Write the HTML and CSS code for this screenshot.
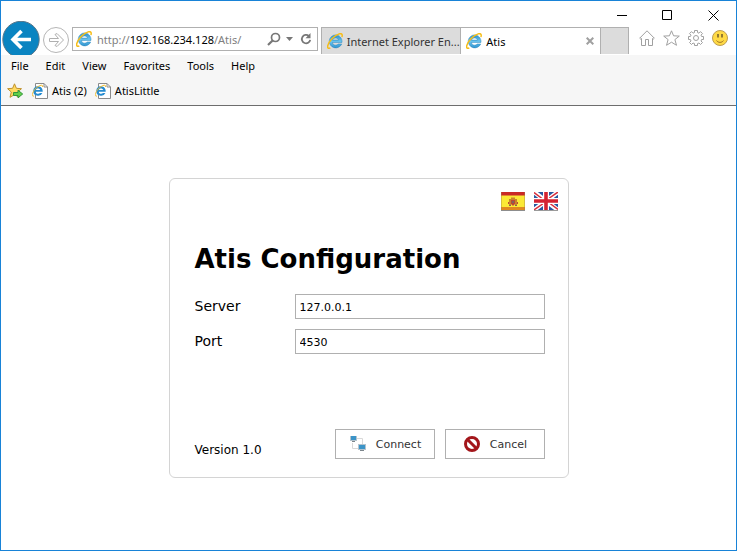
FILE: index.html
```html
<!DOCTYPE html>
<html lang="en">
<head>
    <meta charset="UTF-8">
    <meta name="viewport" content="width=device-width, initial-scale=1.0">
    <title>Atis</title>
    <link rel="stylesheet" href="styles.css">
</head>
<body>

    <!-- Shared icons -->
    <svg class="sprite" aria-hidden="true">
        <defs>
            <linearGradient id="ie-blue" x1="0" y1="0" x2="0" y2="1">
                <stop offset="0" stop-color="#2b8fc8"/>
                <stop offset="0.5" stop-color="#6cc4ee"/>
                <stop offset="1" stop-color="#2f94d0"/>
            </linearGradient>
        </defs>
        <symbol id="ie" viewBox="0 0 16 16">
            <path fill-rule="evenodd" d="M8.500 1.900A6.500 6.500 0 1 0 14.700 11H11.100C9.700 12.900 5.700 12.500 5.500 9.400H15C15.300 5.200 12.500 1.900 8.500 1.900ZM5.600 7.100C6.100 4.200 11.100 4.200 11.400 7.100Z" fill="url(#ie-blue)" stroke="#2585bd" stroke-width="0.500"/>
            <path d="M3.300 14.800C1.500 16 .3 15.100.7 12.900C1.600 8.500 7.300 2.400 12.200.9C14.900.1 15.700 1.600 14.900 4" fill="none" stroke="#f6bd18" stroke-width="1.500"/>
        </symbol>
        <symbol id="ie-page" viewBox="0 0 16 16">
            <path d="M3.500.5H12L15.500 4V15.500H3.500Z" fill="#fff" stroke="#8b8b8b"/>
            <path d="M12 .5V4H15.500" fill="none" stroke="#8b8b8b"/>
            <path fill-rule="evenodd" d="M5.800 3.200A4.800 4.800 0 1 0 10.400 10H8C6.900 11.400 3.700 11 3.600 8.700H10.700C10.900 5.400 8.700 3.200 5.800 3.200ZM3.700 7C4.200 4.900 7.900 4.900 8.300 7Z" fill="#278cd0"/>
            <path d="M2 13C-1.200 14 .4 8.600 4.200 5C7.200 2.200 11.400.9 10.400 4" fill="none" stroke="#f3bd2b"/>
        </symbol>
    </svg>

    <header class="chrome">
        <div class="titlebar">
            <button class="window-btn" aria-label="Minimize"><svg width="11" height="11" viewBox="0 0 11 11"><path d="M1 5.500H11"/></svg></button>
            <button class="window-btn" aria-label="Maximize"><svg width="11" height="11" viewBox="0 0 11 11"><path d="M.5.500H9.500V9.500H.5Z"/></svg></button>
            <button class="window-btn" aria-label="Close"><svg width="11" height="11" viewBox="0 0 11 11"><path d="M.5.500L10.500 10.500M10.500.500L.5 10.500"/></svg></button>
        </div>

        <div class="navbar">
            <button class="nav-btn back-btn" aria-label="Back">
                <svg width="38" height="34" viewBox="0 0 38 34">
                    <circle cx="19" cy="18.500" r="18.200" fill="#0a84c1" stroke="#58768a"/>
                    <path d="M29 18.500H11M19.500 10L11 18.500L19.500 27" fill="none" stroke="#fff" stroke-width="3.600"/>
                </svg>
            </button>
            <button class="nav-btn forward-btn" aria-label="Forward">
                <svg width="26" height="26" viewBox="0 0 26 26">
                    <circle cx="13" cy="13" r="12.500" fill="#fff" stroke="#b5b5b5"/>
                    <path d="M6.500 11.500H15.500L12 7.500L14 6.500L20.500 13L14 19.500L12 18.500L15.500 14.500H6.500Z" fill="#fff" stroke="#b0b0b0"/>
                </svg>
            </button>

            <div class="address">
                <svg class="site-icon" width="16" height="16"><use href="#ie"/></svg>
                <span class="url">http://<span class="host">192.168.234.128</span>/Atis/</span>
                <button class="nav-btn" aria-label="Search">
                    <svg width="14" height="14" viewBox="0 0 14 14"><circle cx="8.500" cy="5.500" r="4" fill="none" stroke="#777" stroke-width="1.700"/><path d="M5.600 8.500L1 13" stroke="#777" stroke-width="2.200"/></svg>
                </button>
                <button class="nav-btn" aria-label="Show address list">
                    <svg width="7" height="4" viewBox="0 0 7 4"><path d="M0 0H7L3.500 4Z" fill="#777"/></svg>
                </button>
                <button class="nav-btn refresh-btn" aria-label="Refresh">
                    <svg width="12" height="12" viewBox="0 0 12 12"><path d="M8.800 2.900A4.200 4.200 0 1 0 10.200 6.800" fill="none" stroke="#777" stroke-width="1.800"/><path d="M10.500 0V5.200H5.500Z" fill="#777"/></svg>
                </button>
            </div>

            <div class="tabs">
                <div class="tab">
                    <svg class="site-icon" width="16" height="16"><use href="#ie"/></svg>
                    <span class="tab-title">Internet Explorer En...</span>
                </div>
                <div class="tab active">
                    <svg class="site-icon" width="16" height="16"><use href="#ie"/></svg>
                    <span class="tab-title">Atis</span>
                    <button class="nav-btn" aria-label="Close tab">
                        <svg width="8" height="8" viewBox="0 0 8 8"><path d="M.7.700L7.300 7.300M7.300.700L.7 7.300" stroke="#a0a0a0" stroke-width="2"/></svg>
                    </button>
                </div>
                <button class="new-tab" aria-label="New tab"></button>
            </div>

            <div class="tools">
                <button class="nav-btn" aria-label="Home">
                    <svg width="16" height="16" viewBox="0 0 16 16"><path d="M.7 8.200L8 .8L15.300 8.200L14.300 9.100L13.500 8.500V15.500H9.500V9.500H6.500V15.500H2.500V8.500L1.700 9.100Z" fill="none" stroke="#a0a0a0"/></svg>
                </button>
                <button class="nav-btn" aria-label="Favorites">
                    <svg width="17" height="16" viewBox="0 0 17 16"><path d="M8.500.800L10.600 5.800L16.300 6.100L11.900 9.600L13.500 15.300L8.500 12.200L3.500 15.300L5.100 9.600L.7 6.100L6.400 5.800Z" fill="none" stroke="#a0a0a0"/></svg>
                </button>
                <button class="nav-btn" aria-label="Tools">
                    <svg width="16" height="16" viewBox="0 0 16 16" fill="none" stroke="#a0a0a0"><path d="M6.500.500H9.500V2.500L11 3.200L12.500 1.600L14.500 3.600L13 5.100L13.600 6.500H15.500V9.500H13.600L13 11L14.500 12.500L12.500 14.500L11 13L9.500 13.600V15.500H6.500V13.600L5 13L3.500 14.500L1.500 12.500L3 11L2.400 9.500H.5V6.500H2.400L3 5.100L1.500 3.600L3.500 1.600L5 3.200L6.500 2.500Z"/><circle cx="8" cy="8" r="2.500"/></svg>
                </button>
                <button class="nav-btn" aria-label="Send a smile">
                    <svg width="16" height="16" viewBox="0 0 16 16"><circle cx="8" cy="8" r="7.500" fill="#ffda45" stroke="#bd9d52"/><path d="M6 4V7.500M10 4V7.500" stroke="#705b2a" stroke-width="1.500"/><path d="M4.500 10.500C6 13 10 13 11.500 10.500" fill="none" stroke="#a37728"/></svg>
                </button>
            </div>
        </div>

        <nav class="menubar">
            <a href="#">File</a>
            <a href="#">Edit</a>
            <a href="#">View</a>
            <a href="#">Favorites</a>
            <a href="#">Tools</a>
            <a href="#">Help</a>
        </nav>

        <nav class="favorites">
            <button class="nav-btn" aria-label="Add to favorites bar">
                <svg width="17" height="16" viewBox="0 0 17 16"><path d="M7.500.800L9.400 5.300L14.500 5.700L10.700 9L12 14.300L7.500 11.600L3 14.300L4.300 9L.6 5.700L5.600 5.300Z" fill="#ffda62" stroke="#bf912c"/><path d="M6.500 9.500H11V7.200L15.700 11L11 14.800V12.500H6.500Z" fill="#62cf4a" stroke="#32963a"/></svg>
            </button>
            <a href="#"><svg width="16" height="16"><use href="#ie-page"/></svg>Atis (2)</a>
            <a href="#"><svg width="16" height="16"><use href="#ie-page"/></svg>AtisLittle</a>
        </nav>
    </header>

    <main class="content">
        <form class="login-box">
            <div class="languages">
                <button type="button" class="flag" aria-label="Español">
                    <svg width="24" height="19" viewBox="0 0 24 19">
                        <path fill="#c92a26" d="M0 0H24V4H0Z"/>
                        <path fill="#fbe935" d="M0 3.500H24V15H0Z"/>
                        <path fill="#e08a20" d="M0 15H24V18H0Z"/>
                        <path fill="#c9852b" d="M8 7H10V14H8ZM14 7H16V14H14ZM10 5.500H14V8H10Z"/>
                        <path fill="#bb4934" d="M10 8H14V12L12 14L10 12ZM7 10H8V12H7ZM16 10H17V12H16Z"/>
                        <path fill="#7e665d" d="M11 9H13V11H11ZM8 13H10V14H8ZM14 13H16V14H14Z"/>
                        <path d="M0 18.500H24" stroke="#8d8d8d"/>
                        <path d="M.5 0V18M23.500 0V18" stroke="#a08050" stroke-opacity=".4"/>
                    </svg>
                </button>
                <button type="button" class="flag" aria-label="English">
                    <svg width="24" height="19" viewBox="0 0 24 19">
                        <path fill="#28589f" d="M0 0H24V18H0Z"/>
                        <path d="M0 0L24 18M24 0L0 18" stroke="#fff" stroke-width="4.500"/>
                        <path d="M0 .5L10 8M24 0L14 7M0 18L10 11M24 17.500L14 10" stroke="#d92e3b" stroke-width="1.500"/>
                        <path d="M12 0V18M0 9H24" stroke="#fff" stroke-width="6"/>
                        <path d="M12 0V18M0 9H24" stroke="#d52331" stroke-width="3.600"/>
                        <path d="M0 18.500H24" stroke="#9a9a9a"/>
                    </svg>
                </button>
            </div>

            <h1>Atis Configuration</h1>

            <div class="field">
                <label for="server">Server</label>
                <input type="text" id="server" value="127.0.0.1">
            </div>
            <div class="field">
                <label for="port">Port</label>
                <input type="text" id="port" value="4530">
            </div>

            <div class="actions">
                <span class="version">Version 1.0</span>
                <button type="submit" class="action-btn">
                    <svg width="16" height="16" viewBox="0 0 16 16"><path d="M7 2.500H12.500V8M2.500 7V12.500H8" fill="none" stroke="#d8d8d8"/><path fill="#b4c4ce" d="M0 0H7V5H0ZM8 8H16V14H8Z"/><path fill="#3c94c8" d="M1 0H6V4H1ZM9 9H15V13H9Z"/><path fill="#7d868c" d="M2 5H5V6H2ZM10 14H14V15H10Z"/></svg>
                    Connect
                </button>
                <button type="button" class="action-btn">
                    <svg width="16" height="16" viewBox="0 0 16 16"><circle cx="8" cy="8" r="6.500" fill="#fff" stroke="#a3161b" stroke-width="3"/><path d="M3.500 3.500L12.500 12.500" stroke="#a3161b" stroke-width="3"/></svg>
                    Cancel
                </button>
            </div>
        </form>
    </main>

</body>
</html>
```
FILE: styles.css
```css
* {
    box-sizing: border-box;
}
body {
    margin: 0;
    min-height: 100vh;
    display: flex;
    flex-direction: column;
    border: 1px solid #1883d7;
    background: #fff;
    color: #000;
    font-family: "DejaVu Sans", Verdana, sans-serif;
}
svg {
    display: block;
    flex-shrink: 0;
}
.sprite {
    position: absolute;
    width: 0;
    height: 0;
}
button {
    font-family: inherit;
    cursor: pointer;
}

/* Browser chrome */
.chrome {
    font-family: "Noto Sans", "Open Sans", sans-serif;
    font-size: 11px;
    border-bottom: 1px solid #6d6d6d;
    background: #f6f6f6;
}
.titlebar {
    display: flex;
    justify-content: flex-end;
    height: 26px;
    background: #fff;
}
.window-btn {
    width: 46px;
    padding: 3px 0 0 1px;
    border: 0;
    background: none;
    display: flex;
    align-items: center;
    justify-content: center;
}
.window-btn svg {
    fill: none;
    stroke: #000;
}
.navbar {
    display: flex;
    align-items: flex-start;
    height: 28px;
    padding-left: 1px;
    background: #fff;
}
.nav-btn {
    padding: 0;
    border: 0;
    background: none;
}
.back-btn {
    align-self: flex-end;
}
.forward-btn {
    margin: 0 3px;
}
.address {
    display: flex;
    align-items: center;
    flex: 10 1 0;
    height: 24px;
    padding: 0 5px 0 3px;
    gap: 5px;
    border: 1px solid #b0b0b0;
    white-space: nowrap;
}
.url {
    flex: 1;
    color: #808080;
}
.host {
    color: #000;
}
.refresh-btn {
    margin-left: 2px;
}
.tabs {
    display: flex;
    flex: 13 1 0;
    height: 27px;
    margin-left: 3px;
    border: 1px solid #b0b0b0;
    border-bottom: 0;
}
.tab {
    display: flex;
    align-items: center;
    flex: 1;
    min-width: 0;
    padding: 0 6px 0 5px;
    gap: 4px;
    border-right: 1px solid #b0b0b0;
    background: #dcdcdc;
    color: #333;
}
.tab.active {
    background: #fff;
    color: #000;
}
.tab-title {
    flex: 1;
    white-space: nowrap;
}
.new-tab {
    width: 27px;
    padding: 0;
    border: 0;
    background: #dcdcdc;
}
.tools {
    display: flex;
    align-items: center;
    gap: 8px;
    padding: 3px 8px 0 10px;
}
.menubar {
    display: flex;
    align-items: center;
    height: 21px;
    padding: 0 10px;
    gap: 17px;
}
.menubar a,
.favorites a {
    color: #000;
    text-decoration: none;
}
.favorites {
    display: flex;
    align-items: center;
    height: 29px;
    padding: 0 6px;
    gap: 8px;
}
.favorites a {
    display: flex;
    align-items: center;
    gap: 4px;
}

/* Page */
.content {
    flex: 1;
    display: flex;
    align-items: center;
    justify-content: center;
}
.login-box {
    width: 400px;
    min-height: 300px;
    padding: 13px 23px 18px 25px;
    display: flex;
    flex-direction: column;
    border: 1px solid #d4d4d4;
    border-radius: 6px;
}
.languages {
    display: flex;
    justify-content: flex-end;
    gap: 9px;
    margin-right: -13px;
}
.flag {
    padding: 0;
    border: 0;
    background: none;
}
h1 {
    margin: 32px 0 19px;
    font-size: 26px;
    line-height: 32px;
    white-space: nowrap;
}
.field {
    display: flex;
    align-items: center;
    margin-bottom: 10px;
}
.field label {
    width: 100px;
    padding-bottom: 2px;
    font-size: 14px;
}
.field input {
    flex: 1;
    min-width: 0;
    height: 25px;
    padding: 1px 4px 0;
    border: 1px solid #b0b0b0;
    font-family: inherit;
    font-size: 11px;
}
.actions {
    display: flex;
    align-items: flex-end;
    gap: 10px;
    margin-top: auto;
}
.version {
    flex: 1;
    font-size: 12px;
    line-height: 18px;
}
.action-btn {
    display: flex;
    align-items: center;
    justify-content: center;
    gap: 10px;
    width: 100px;
    height: 30px;
    padding: 0 0 0 2px;
    border: 1px solid #b0b0b0;
    background: #fff;
    color: #333;
    font-size: 11px;
}
```
